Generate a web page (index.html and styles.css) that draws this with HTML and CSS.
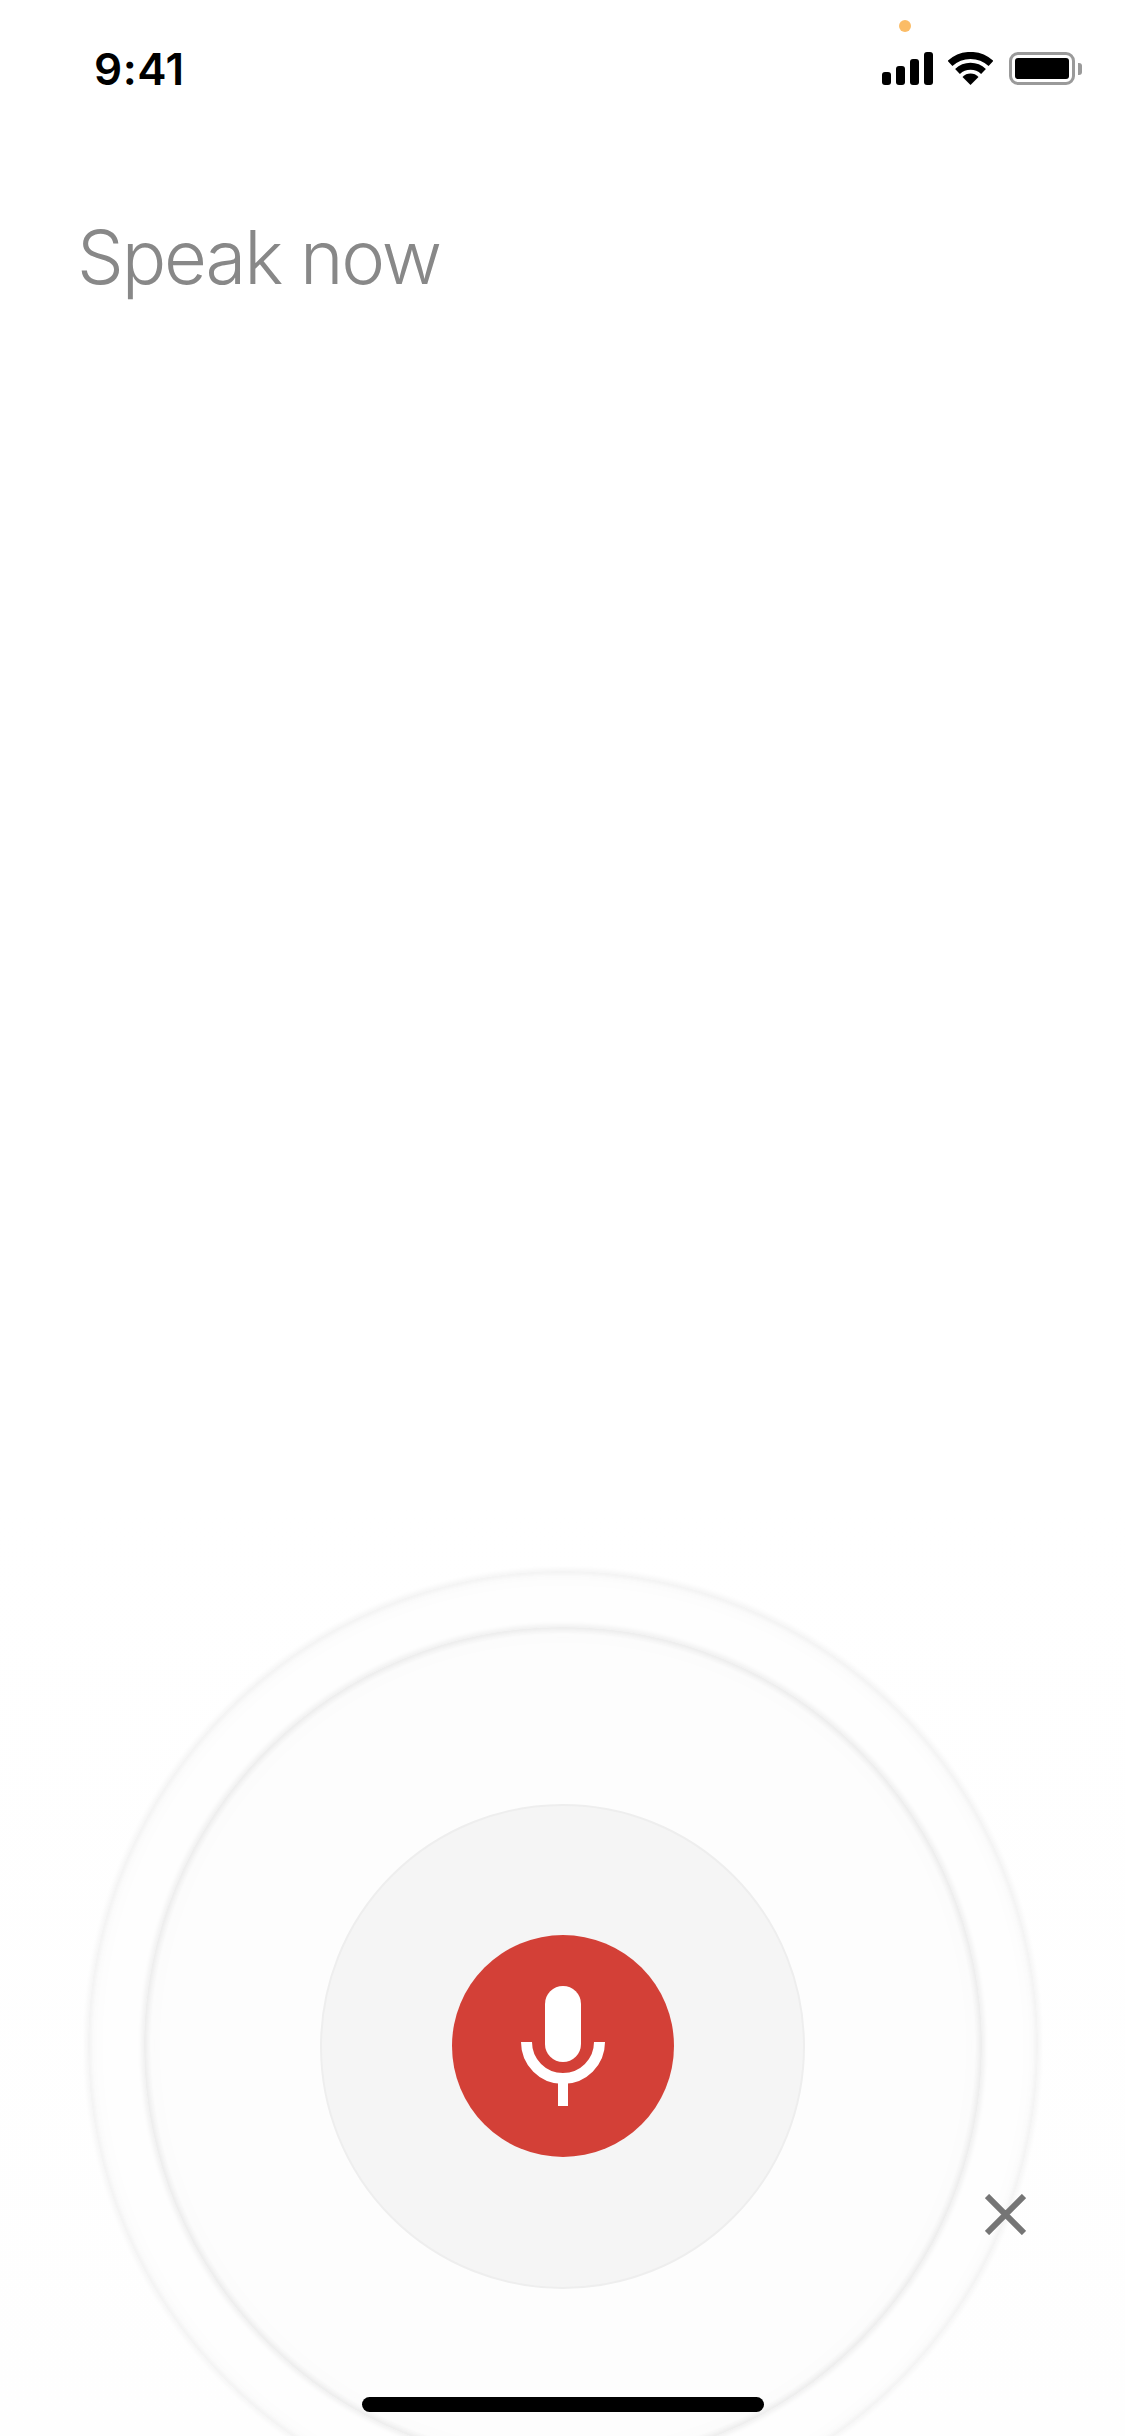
FILE: index.html
```html
<!DOCTYPE html>
<html lang="en">
<head>
    <meta charset="UTF-8">
    <meta name="viewport" content="width=device-width, initial-scale=1.0">
    <title>Speak now</title>
    <link rel="stylesheet" href="styles.css">
</head>
<body>
    <div class="screen">
        <div class="status-bar">
            <span class="time">9:41</span>
            <div class="status-icons">
                <svg class="signal" width="51" height="33" viewBox="0 0 51 33">
                    <rect x="0" y="20" width="9" height="13" rx="3"/>
                    <rect x="14" y="14" width="9" height="19" rx="3"/>
                    <rect x="28" y="7" width="9" height="26" rx="3"/>
                    <rect x="42" y="0" width="9" height="33" rx="3"/>
                </svg>
                <svg class="wifi" width="45" height="33" viewBox="0 0 45 33">
                    <path d="M2 11.5 A30 30 0 0 1 43 11.5" fill="none" stroke="#000" stroke-width="7"/>
                    <path d="M9.5 19.5 A19 19 0 0 1 35.5 19.5" fill="none" stroke="#000" stroke-width="7"/>
                    <path d="M14.5 25 A11 11 0 0 1 30.5 25 L22.5 33 Z"/>
                </svg>
                <div class="battery">
                    <div class="battery-level"></div>
                </div>
                <div class="battery-nub"></div>
            </div>
            <div class="mic-dot"></div>
        </div>

        <h1 class="prompt">Speak now</h1>

        <div class="ring ring-outer">
            <div class="ring ring-inner">
                <div class="pulse">
                    <button class="mic-btn">
                        <svg width="222" height="222" viewBox="0 0 222 222">
                            <rect x="93" y="51" width="36" height="76" rx="18" fill="#fff"/>
                            <path d="M74.5 107 A36.5 36.5 0 0 0 147.5 107" fill="none" stroke="#fff" stroke-width="11"/>
                            <rect x="106" y="143" width="10" height="28" fill="#fff"/>
                        </svg>
                    </button>
                </div>
            </div>
        </div>

        <svg class="close" width="41" height="41" viewBox="0 0 41 41">
            <path d="M2 2 L39 39 M39 2 L2 39" stroke="#757575" stroke-width="6"/>
        </svg>
        <div class="home-bar"></div>
    </div>
</body>
</html>
```

FILE: styles.css
```css
html, body { margin: 0; padding: 0; background: #fff; }
.screen { position: relative; width: 1125px; height: 2436px; overflow: hidden; background: linear-gradient(#fff 1500px, #fefefe); font-family: Inter, "Liberation Sans", sans-serif; }

.status-bar { position: relative; display: flex; justify-content: space-between; align-items: flex-end; height: 85px; padding: 0 43px 0 94px; }
.time { font-size: 44px; font-weight: 600; line-height: 32px; color: #000; letter-spacing: 0.5px; }
.status-icons { display: flex; align-items: flex-end; }
.signal { margin-right: 15px; }
.wifi { margin-right: 16px; }
.battery { box-sizing: border-box; width: 66px; height: 33px; padding: 3px; border: 3px solid #9a9a9a; border-radius: 9px; }
.battery-level { height: 100%; background: #000; border-radius: 3px; }
.battery-nub { width: 4px; height: 12px; margin: 0 0 10px 3px; background: #9a9a9a; border-radius: 0 3px 3px 0; }
.mic-dot { position: absolute; left: 899px; top: 20px; width: 12px; height: 12px; border-radius: 50%; background: #fbbc66; }

.prompt { margin: 126px 0 0 77px; font-size: 74px; font-weight: 300; line-height: 92px; color: #888; letter-spacing: -2.1px; }

.ring { box-sizing: border-box; display: flex; align-items: center; justify-content: center; border-radius: 50%; }
.ring-outer { width: 950px; height: 950px; margin: 1268px auto 0; box-shadow: inset 0 0 5px 3px #f2f2f2, inset 0 0 20px 6px #fbfbfb, 0 0 5px 2px #f4f4f4; background: #fefefe; }
.ring-inner { width: 838px; height: 838px; box-shadow: inset 0 0 5px 3px #ebebeb, inset 0 0 20px 6px #fafafa, 0 0 5px 2px #eeeeee; background: #fdfdfd; }
.pulse { box-sizing: border-box; display: flex; align-items: center; justify-content: center; width: 485px; height: 485px; border: 2px solid #eeeeee; border-radius: 50%; background: #f5f5f5; }
.mic-btn { display: block; width: 222px; height: 222px; padding: 0; border: none; border-radius: 50%; background: #d34037; }
.mic-btn svg { display: block; }

.close { position: absolute; left: 985px; top: 2194px; }
.home-bar { position: absolute; left: 362px; top: 2397px; width: 402px; height: 15px; border-radius: 8px; background: #000; }
```
